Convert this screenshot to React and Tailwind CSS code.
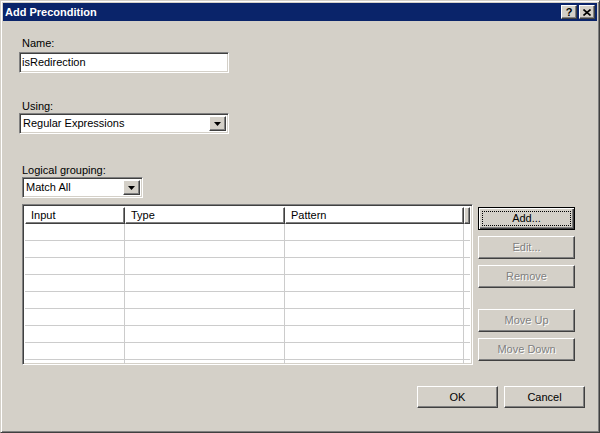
import React from 'react';

const sunken =
  'border border-t-[#808080] border-l-[#808080] border-r-white border-b-white shadow-[inset_1px_1px_0_#404040,inset_-1px_-1px_0_#d4d0c8]';
const raised =
  'border border-t-white border-l-white border-r-[#404040] border-b-[#404040] shadow-[inset_-1px_-1px_0_#808080]';

const Arrow = () => (
  <div className={`${raised} w-[17px] h-full bg-[#d4d0c8] flex items-center justify-center`}>
    <svg width="7" height="4" viewBox="0 0 7 4">
      <path d="M0 0h7L3.5 4z" fill="#000" />
    </svg>
  </div>
);

const Combo = ({ value, width }) => (
  <div className={`${sunken} ${width} h-[21px] bg-white flex items-stretch p-[2px]`}>
    <div className="flex-1 pl-[1px] leading-[15px] text-black">{value}</div>
    <Arrow />
  </div>
);

const Btn = ({ label, disabled, isDefault }) => {
  if (isDefault) {
    return (
      <button className="w-[97px] h-[23px] border border-black bg-[#d4d0c8] p-[3px] shadow-[inset_1px_1px_0_#fff,inset_-1px_-1px_0_#404040,inset_-2px_-2px_0_#808080]">
        <span className="w-full h-full border border-dotted border-black flex items-center justify-center text-black">
          {label}
        </span>
      </button>
    );
  }
  return (
    <button
      className={`${raised} w-[97px] h-[23px] bg-[#d4d0c8] flex items-center justify-center ${
        disabled ? 'text-[#808080] [text-shadow:1px_1px_0_#fff]' : 'text-black'
      }`}
    >
      {label}
    </button>
  );
};

const HeaderCell = ({ label, width }) => (
  <div className={`${raised} ${width} h-full pl-[5px] leading-[14px] text-black`}>{label}</div>
);

const rows = [0, 1, 2, 3, 4, 5, 6, 7, 8];

const App = () => {
  return (
    <div className="w-[600px] h-[433px] bg-[#d4d0c8] font-['Liberation_Sans',Arial,sans-serif] text-[11px] text-black border border-t-[#d4d0c8] border-l-[#d4d0c8] border-r-[#404040] border-b-[#404040] shadow-[inset_1px_1px_0_#fff,inset_-1px_-1px_0_#808080] p-[2px] flex flex-col">
      {/* title bar */}
      <div className="h-[18px] bg-[#0a246a] flex items-center pl-[2px] pr-[2px]">
        <span className="flex-1 text-white font-bold text-[11px]">Add Precondition</span>
        <div className={`${raised} w-[16px] h-[14px] bg-[#d4d0c8] flex items-center justify-center font-bold text-[11px] leading-none`}>
          ?
        </div>
        <div className={`${raised} w-[16px] h-[14px] ml-[2px] bg-[#d4d0c8] flex items-center justify-center`}>
          <svg width="8" height="7" viewBox="0 0 8 7">
            <path d="M0.5 0.5l7 6M7.5 0.5l-7 6" stroke="#000" strokeWidth="1.6" />
          </svg>
        </div>
      </div>

      {/* body */}
      <div className="flex-1 flex flex-col">
        <div className="mt-[16px] ml-[19px] leading-[13px]">Name:</div>
        <div className={`${sunken} mt-[2px] ml-[16px] w-[210px] h-[21px] bg-white px-[2px] leading-[19px]`}>
          isRedirection
        </div>

        <div className="mt-[27px] ml-[19px] leading-[13px]">Using:</div>
        <div className="ml-[16px]">
          <Combo value="Regular Expressions" width="w-[210px]" />
        </div>

        <div className="mt-[30px] ml-[19px] leading-[13px]">Logical grouping:</div>
        <div className="ml-[19px]">
          <Combo value="Match All" width="w-[121px]" />
        </div>

        <div className="flex mt-[6px] ml-[19px]">
          {/* list view */}
          <div className={`${sunken} w-[451px] h-[161px] bg-white p-[2px] overflow-hidden`}>
            <div className="flex h-[17px]">
              <HeaderCell label="Input" width="w-[100px]" />
              <HeaderCell label="Type" width="w-[160px]" />
              <HeaderCell label="Pattern" width="w-[179px]" />
              <div className={`${raised} flex-1 h-full bg-[#d4d0c8]`} />
            </div>
            {rows.map((r) => (
              <div key={r} className="flex h-[17px] border-b border-[#cccccc]">
                <div className="w-[100px] border-r border-[#cccccc]" />
                <div className="w-[160px] border-r border-[#cccccc]" />
                <div className="w-[179px] border-r border-[#cccccc]" />
                <div className="flex-1" />
              </div>
            ))}
          </div>

          {/* side buttons */}
          <div className="ml-[5px] mt-[3px] flex flex-col">
            <Btn label="Add..." isDefault />
            <div className="mt-[6px]">
              <Btn label="Edit..." disabled />
            </div>
            <div className="mt-[6px]">
              <Btn label="Remove" disabled />
            </div>
            <div className="mt-[21px]">
              <Btn label="Move Up" disabled />
            </div>
            <div className="mt-[6px]">
              <Btn label="Move Down" disabled />
            </div>
          </div>
        </div>

        <div className="flex justify-end gap-[6px] mt-[21px] mr-[12px]">
          <button className={`${raised} w-[81px] h-[22px] bg-[#d4d0c8] text-black`}>OK</button>
          <button className={`${raised} w-[81px] h-[22px] bg-[#d4d0c8] text-black`}>Cancel</button>
        </div>
      </div>
    </div>
  );
};

export default App;
